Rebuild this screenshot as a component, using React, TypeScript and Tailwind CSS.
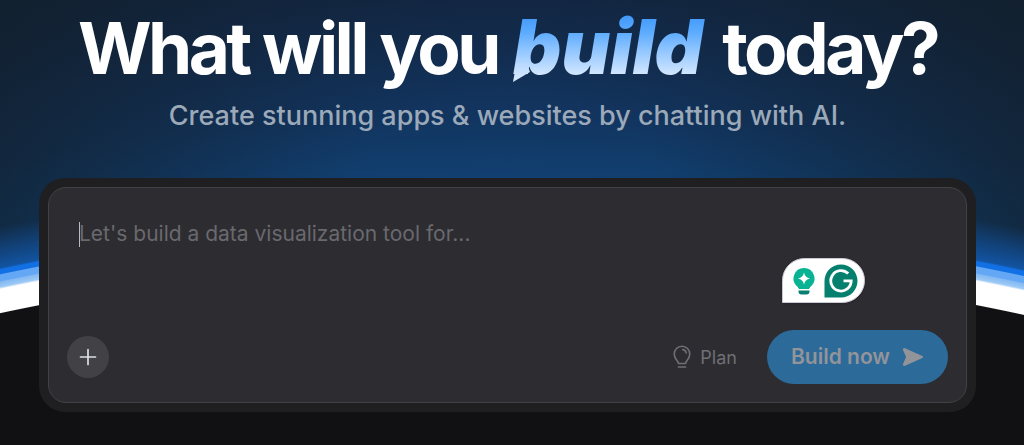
import React, { useState } from "react";

function Backdrop() {
  return (
    <div
      aria-hidden="true"
      className="absolute inset-0 -z-10 bg-[radial-gradient(circle_at_508px_2689px,#111113_2429px,#ffffff_2430px,#ffffff_2453px,#9ecaf5_2455px,#84b9f3_2460px,#64a8f5_2461px,#64a8f5_2467px,#1170e4_2468px,#1170e4_2472px,#1253a0_2474px,transparent_2514px),radial-gradient(ellipse_620px_400px_at_508px_190px,transparent_25%,rgba(18,30,40,0.8)_100%),radial-gradient(circle_at_508px_2689px,#11427a_2474px,#11427a_2490px,#113e6e_2520px,#12345e_2580px,#12294a_2690px,#12253d_2760px)]"
    />
  );
}

function BuildWord() {
  return (
    <span className="relative mr-0.5 ml-0.5 inline-block text-[75px] tracking-normal">
      <span className="bg-linear-to-b from-[#2e8df5] from-5% via-[#5dacff] via-35% to-[#dcecff] to-85% bg-clip-text pr-1 font-black text-transparent italic">
        build
      </span>
      <svg
        viewBox="0 0 20 20"
        aria-hidden="true"
        className="absolute bottom-0 left-0 size-5"
      >
        <defs>
          <linearGradient id="tail" x1="0" y1="0" x2="0" y2="1">
            <stop offset="0" stopColor="#b8d8ff" />
            <stop offset="1" stopColor="#dcecff" />
          </linearGradient>
        </defs>
        <path d="M3.5 0L14 0L17 9L0 19Z" fill="url(#tail)" />
      </svg>
    </span>
  );
}

function BulbIcon() {
  return (
    <svg
      viewBox="0 0 20 24"
      fill="none"
      stroke="currentColor"
      strokeWidth="1.6"
      strokeLinecap="round"
      strokeLinejoin="round"
      aria-hidden="true"
      className="h-6 w-5"
    >
      <path d="M6.5 18.5L5.8 16.6C4.2 14.6 2.2 12.6 2.2 9A7.8 7.8 0 0 1 17.8 9C17.8 12.6 15.8 14.6 14.2 16.6L13.5 18.5Z" />
      <path d="M10.8 4.6C12.8 4.9 14 6.3 14.2 8" />
      <path d="M6.4 22H13.6" />
    </svg>
  );
}

function SendIcon() {
  return (
    <svg viewBox="0 0 22 20" fill="currentColor" aria-hidden="true" className="h-5 w-[22px]">
      <path d="M3 1.2L20.4 9Q22 10 20.4 11L3 18.8C1.5 19.4.5 18 1.1 16.7L4.1 10L1.1 3.3C.5 2 1.5.6 3 1.2Z" />
    </svg>
  );
}

function WritingBadge() {
  return (
    <div className="absolute top-[70px] right-[101px] flex h-[45px] w-[83px] items-center gap-2 rounded-full rounded-bl-none border border-[#c9cad6] bg-white pl-[9px] shadow-sm">
      <svg viewBox="0 0 24 30" aria-hidden="true" className="h-[30px] w-6">
        <path d="M12 2A10.5 10.5 0 0 0 5.5 20.7L7 23H17L18.5 20.7A10.5 10.5 0 0 0 12 2Z" fill="#08b394" />
        <path d="M12 6.5Q13 11.5 18 12.5Q13 13.5 12 18.5Q11 13.5 6 12.5Q11 11.5 12 6.5Z" fill="#fff" />
        <path d="M6.5 24.5H17.5V25.5Q17.5 28.5 14.5 28.5H9.5Q6.5 28.5 6.5 25.5Z" fill="#087f70" />
      </svg>
      <svg viewBox="0 0 34 34" aria-hidden="true" className="h-[34px] w-[34px]">
        <path d="M17 0.5A16.5 16.5 0 1 1 17 33.5H0.5V17A16.5 16.5 0 0 1 17 .5Z" fill="#05806f" />
        <path
          d="M24.2 9.6A10.2 10.2 0 1 0 27.2 16.8H19.5M27.2 15.4V17A10.2 10.2 0 0 1 24.8 23.4"
          fill="none"
          stroke="#fff"
          strokeWidth="2.8"
        />
      </svg>
    </div>
  );
}

export default function App() {
  const [prompt, setPrompt] = useState("");

  return (
    <main className="relative isolate min-h-screen overflow-hidden bg-[#111113] pt-[11px] pr-12 pb-8 pl-[39px] font-[Inter,sans-serif]">
      <Backdrop />

      <h1 className="text-center text-[71px] leading-[72px] font-bold tracking-tighter whitespace-nowrap text-white">
        What will you <BuildWord /> today?
      </h1>
      <p className="mt-4 text-center text-[27px] leading-8 font-medium text-[#9ba9b9]">
        Create stunning apps &amp; websites by chatting with AI.
      </p>

      <form
        onSubmit={(e) => e.preventDefault()}
        className="mt-[46px] rounded-[26px] bg-[#1f1f21] p-[9px]"
      >
        <div className="relative flex flex-col rounded-[18px] border border-[#424246] bg-[#2d2c31] p-[18px]">
          <div className="relative px-3 pt-3">
            <textarea
              aria-label="Describe what to build"
              value={prompt}
              onChange={(e) => setPrompt(e.target.value)}
              placeholder="Let's build a data visualization tool for..."
              className="block h-[112px] w-full resize-none text-[21px] leading-8 text-white placeholder:text-[#69696e] focus:outline-none"
            />
            {prompt === "" && (
              <span className="absolute top-4 left-3 h-[25px] w-px bg-[#b5bcc6]" />
            )}
          </div>

          <div className="flex items-center justify-between">
            <button
              type="button"
              aria-label="Add attachment"
              className="flex size-[42px] items-center justify-center rounded-full bg-[#424146] text-[#dcdfe6]"
            >
              <svg
                viewBox="0 0 18 18"
                stroke="currentColor"
                strokeWidth="1.7"
                strokeLinecap="round"
                aria-hidden="true"
                className="size-[18px]"
              >
                <path d="M9 1.5V16.5M1.5 9H16.5" />
              </svg>
            </button>

            <div className="flex items-center gap-[30px]">
              <button type="button" className="flex items-center gap-2 text-[18px] text-[#6f6f74]">
                <BulbIcon />
                Plan
              </button>
              <button
                type="submit"
                className="flex h-[54px] items-center gap-3 rounded-full bg-[#2c6a9a] px-6 text-[21px] font-semibold text-[#929499]"
              >
                Build now
                <SendIcon />
              </button>
            </div>
          </div>

          <WritingBadge />
        </div>
      </form>
    </main>
  );
}
